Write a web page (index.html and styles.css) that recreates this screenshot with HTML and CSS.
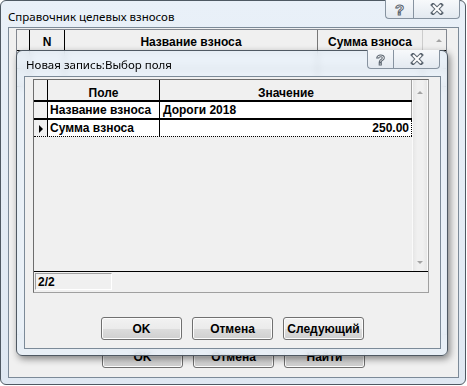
FILE: index.html
```html
<!DOCTYPE html>
<html lang="ru">
<head>
  <meta charset="UTF-8">
  <title>Справочник целевых взносов</title>
  <link rel="stylesheet" href="styles.css">
</head>
<body>

<div class="desk">

  <!-- main window -->
  <div class="win win-main">
    <div class="caption">
      <span class="caption-title">Справочник целевых взносов</span>
      <div class="caption-btns">
        <span class="cbtn cbtn-help">?</span>
        <span class="cbtn cbtn-close">
          <svg width="14" height="12" viewBox="0 0 14 12">
            <path d="M3 2 L11 10 M11 2 L3 10" stroke="#5b6570" stroke-width="4" stroke-linecap="square"/>
            <path d="M3 2 L11 10 M11 2 L3 10" stroke="#fff" stroke-width="2"/>
          </svg>
        </span>
      </div>
    </div>
    <div class="client">
      <div class="list">
        <div class="list-head">
          <span class="lh lh-ind"></span>
          <span class="lh lh-n">N</span>
          <span class="lh lh-name">Название взноса</span>
          <span class="lh lh-sum">Сумма взноса</span>
          <span class="lh lh-sb"><i class="arr-up"></i></span>
        </div>
        <div class="list-row">
          <span class="lc lc-ind"></span>
          <span class="lc lc-n"></span>
          <span class="lc lc-name"></span>
          <span class="lc lc-sum"></span>
        </div>
        <div class="list-row">
          <span class="lc lc-ind"></span>
          <span class="lc lc-n"></span>
          <span class="lc lc-name"></span>
          <span class="lc lc-sum"></span>
        </div>
      </div>
      <div class="btn-row">
        <button class="btn">OK</button>
        <button class="btn">Отмена</button>
        <button class="btn">Найти</button>
      </div>
    </div>
  </div>

  <!-- dialog on top -->
  <div class="win win-dlg">
    <div class="caption caption-dlg">
      <span class="caption-title">Новая запись:Выбор поля</span>
      <div class="caption-btns">
        <span class="cbtn cbtn-help">?</span>
        <span class="cbtn cbtn-close">
          <svg width="14" height="12" viewBox="0 0 14 12">
            <path d="M3 2 L11 10 M11 2 L3 10" stroke="#5b6570" stroke-width="4" stroke-linecap="square"/>
            <path d="M3 2 L11 10 M11 2 L3 10" stroke="#fff" stroke-width="2"/>
          </svg>
        </span>
      </div>
    </div>
    <div class="client client-dlg">
      <div class="panel">
        <div class="tbl">
          <div class="cells">
            <div class="row row-head">
              <span class="cell c-ind"></span>
              <span class="cell c-field">Поле</span>
              <span class="cell c-value">Значение</span>
            </div>
            <div class="row">
              <span class="cell c-ind"></span>
              <span class="cell c-field">Название взноса</span>
              <span class="cell c-value">Дороги 2018</span>
            </div>
            <div class="row row-current">
              <span class="cell c-ind"><i class="marker"></i></span>
              <span class="cell c-field">Сумма взноса</span>
              <span class="cell c-value num">250.00</span>
            </div>
          </div>
          <div class="vscroll">
            <i class="arr-up"></i>
            <i class="arr-down"></i>
          </div>
        </div>
        <div class="status">
          <span class="status-field">2/2</span>
        </div>
      </div>
      <div class="btn-row btn-row-dlg">
        <button class="btn">OK</button>
        <button class="btn">Отмена</button>
        <button class="btn">Следующий</button>
      </div>
    </div>
  </div>

</div>

</body>
</html>
```

FILE: styles.css
```css
* {
  box-sizing: border-box;
}

body {
  margin: 0;
  background: #fff;
  font-family: "Liberation Sans", Arial, sans-serif;
  font-size: 12px;
  color: #000;
}

.desk {
  position: relative;
  width: 467px;
  height: 386px;
}

/* window frame */
.win {
  display: flex;
  flex-direction: column;
  border: 1px solid #4f5963;
  border-radius: 6px;
  background: linear-gradient(#e9f0f8, #dfe8f2);
}

.win-main {
  width: 466px;
  height: 385px;
}

.win-dlg {
  position: absolute;
  left: 16px;
  top: 50px;
  width: 432px;
  height: 306px;
  background: rgba(231, 239, 247, 0.86);
  backdrop-filter: blur(3px);
  box-shadow: 2px 3px 7px rgba(0, 0, 0, 0.45);
}

.caption {
  display: flex;
  align-items: flex-start;
  height: 26px;
  flex: none;
  padding-left: 7px;
}

.caption-dlg {
  height: 25px;
  padding-left: 9px;
}

.caption-title {
  font-family: "Noto Sans", sans-serif;
  font-size: 11.5px;
  line-height: 16px;
  padding-top: 8px;
}

.caption-dlg .caption-title {
  padding-top: 6px;
}

.caption-btns {
  display: flex;
  margin-left: auto;
  margin-right: 5px;
  margin-top: -1px;
}

.caption-dlg .caption-btns {
  margin-right: 7px;
}

.cbtn {
  display: flex;
  align-items: center;
  justify-content: center;
  height: 19px;
  border: 1px solid #8793a0;
  border-top: none;
  background: linear-gradient(#f7f9fb, #e3e9f0);
}

.cbtn-help {
  width: 28px;
  border-right: none;
  border-radius: 0 0 0 4px;
  font-family: "Liberation Sans", Arial, sans-serif;
  font-weight: bold;
  font-size: 15px;
  color: #fff;
  -webkit-text-stroke: 1px #5b6570;
}

.caption-dlg .cbtn-help {
  width: 26px;
}

.cbtn-close {
  width: 47px;
  border-radius: 0 0 4px 0;
}

/* client areas */
.client {
  flex: 1;
  display: flex;
  flex-direction: column;
  margin: 0 6px 6px 7px;
  padding: 1px 7px 9px 7px;
  background: #f0f0f0;
  border: 1px solid #7c8a98;
}

.client-dlg {
  padding: 2px 8px 8px 8px;
}

/* list behind */
.list {
  flex: 1;
  width: 431px;
  margin-bottom: 10px;
  border: 1px solid #828790;
  background: #fff;
  font-weight: bold;
}

.list-head,
.list-row {
  display: flex;
}

.list-head {
  height: 21px;
  background: #f0f0f0;
  border-bottom: 1px solid #000;
}

.lh {
  padding-top: 5px;
  line-height: 14px;
  text-align: center;
  border-right: 1px solid #000;
}

.lh-ind { width: 13px; }
.lh-n { width: 35px; }
.lh-name { width: 253px; border-right-color: #777; }
.lh-sum { width: 105px; border-right-color: #ccc; }

.lh-sb {
  flex: 1;
  border-right: none;
  position: relative;
}

.list-row {
  height: 18px;
  border-bottom: 1px solid #000;
}

.lc {
  border-right: 1px solid #000;
}

.lc-ind { width: 13px; background: #f0f0f0; }
.lc-n { width: 35px; }
.lc-name { width: 253px; }
.lc-sum { width: 105px; }

/* buttons */
.btn-row {
  display: flex;
  justify-content: center;
  gap: 10px;
}

.btn-row-dlg {
  margin-top: 24px;
}

.btn {
  width: 81px;
  height: 23px;
  padding: 0;
  border: 1px solid #707070;
  border-radius: 3px;
  background: linear-gradient(#f2f2f2 0%, #ebebeb 50%, #dddddd 51%, #cfcfcf 100%);
  box-shadow: inset 0 0 0 1px #fcfcfc;
  font-family: "Liberation Sans", Arial, sans-serif;
  font-weight: bold;
  font-size: 12px;
  color: #000;
}

/* record panel */
.panel {
  display: flex;
  flex-direction: column;
  width: 396px;
  height: 214px;
  border: 1px solid #a0a0a0;
  border-left-color: #6d6d6d;
  border-top-color: #6d6d6d;
  background: #f0f0f0;
}

.tbl {
  display: flex;
  height: 193px;
  border-bottom: 1px solid #000;
}

.cells {
  flex: 1;
}

.row {
  display: flex;
  height: 18px;
  border-bottom: 2px solid #000;
  font-weight: bold;
}

.row-head {
  height: 22px;
  background: #f0f0f0;
}

.row-current {
  height: 17px;
  border-bottom: 1px dotted #000;
}

.cell {
  line-height: 14px;
  padding-top: 1px;
  border-right: 1px solid #000;
  white-space: nowrap;
}

.row-head .cell {
  padding-top: 6px;
  text-align: center;
}

.c-ind {
  width: 14px;
  background: #f0f0f0;
  position: relative;
}

.c-field {
  width: 112px;
  padding-left: 2px;
  background: #fff;
}

.c-value {
  flex: 1;
  padding-left: 3px;
  padding-right: 2px;
  background: #fff;
  border-right-color: #a0a0a0;
}

.row-head .c-field,
.row-head .c-value {
  background: #f0f0f0;
}

.row-head .c-field {
  padding-left: 0;
}

.num {
  text-align: right;
}

.row-current .c-value {
  border-right: 1px dotted #000;
}

.marker {
  position: absolute;
  left: 5px;
  top: 5px;
  width: 0;
  height: 0;
  border-left: 4px solid #000;
  border-top: 4px solid transparent;
  border-bottom: 4px solid transparent;
}

.vscroll {
  position: relative;
  width: 16px;
  border-left: 1px solid #fafafa;
  border-right: 1px solid #fafafa;
  background: linear-gradient(90deg, #e6e6e6, #f0f0f0 30%, #f0f0f0 70%, #e6e6e6);
}

.arr-up,
.arr-down {
  position: absolute;
  left: 4px;
  width: 0;
  height: 0;
  border-left: 3px solid transparent;
  border-right: 3px solid transparent;
}

.arr-up {
  top: 11px;
  border-bottom: 3px solid #a3a3a3;
}

.arr-down {
  bottom: 7px;
  border-top: 3px solid #a3a3a3;
}

.lh-sb .arr-up {
  left: 13px;
  top: 9px;
}

.status {
  height: 20px;
  padding: 1px 0 0 1px;
}

.status-field {
  display: block;
  width: 77px;
  height: 17px;
  padding: 2px 0 0 2px;
  line-height: 13px;
  border: 1px solid #fff;
  border-left-color: #a0a0a0;
  border-top-color: #a0a0a0;
  font-weight: bold;
}
```
